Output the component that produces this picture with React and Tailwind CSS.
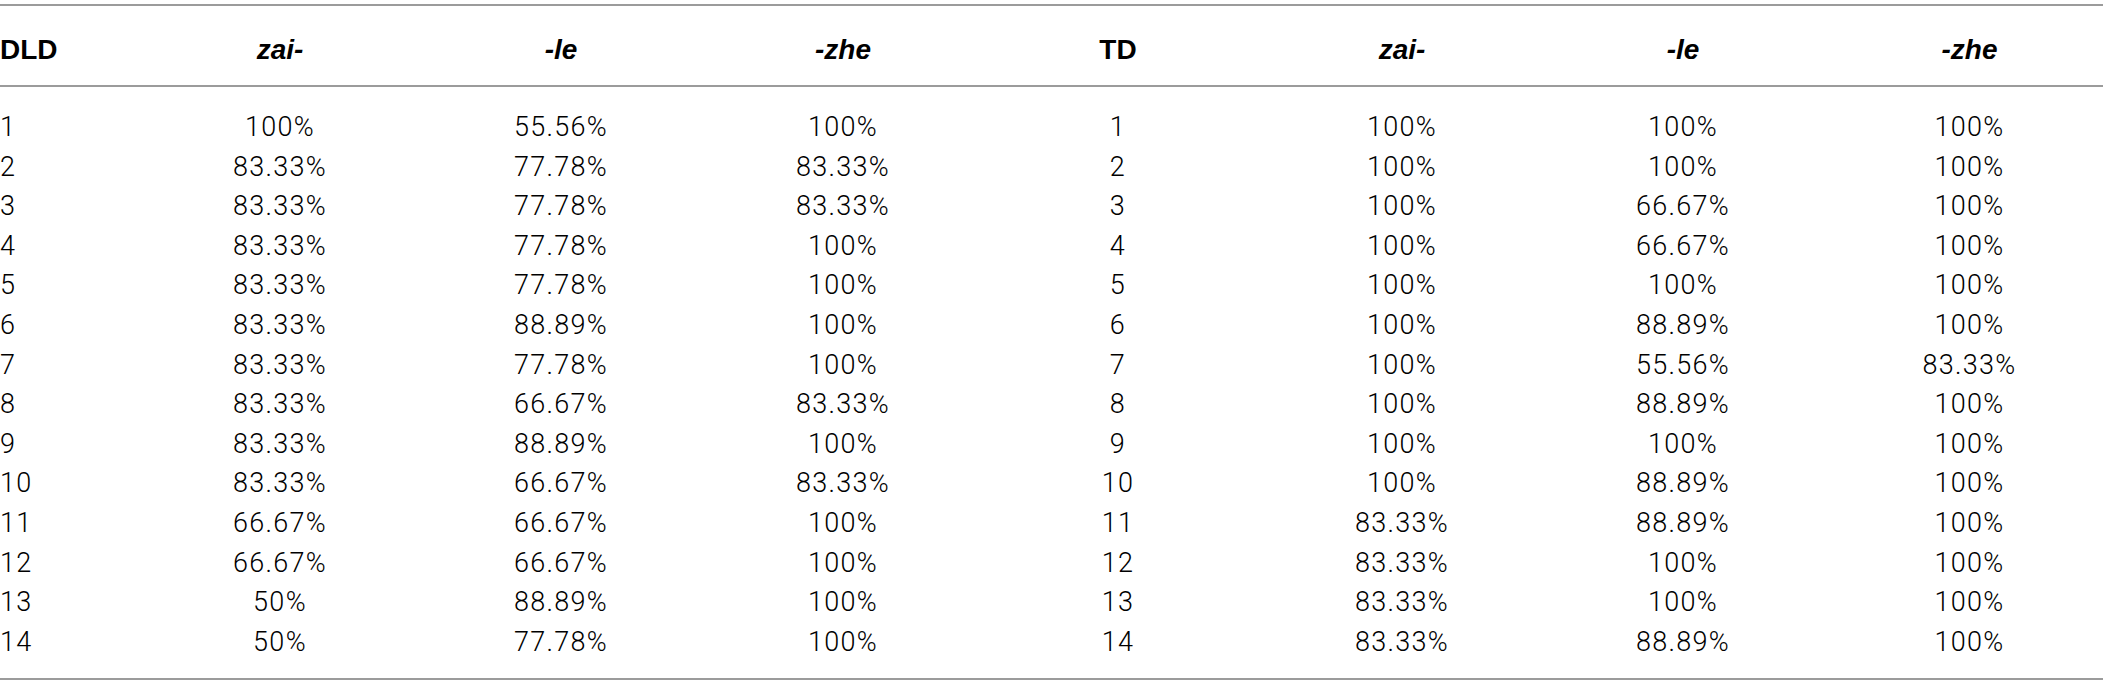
const dld = [
  ['1', '100%', '55.56%', '100%'],
  ['2', '83.33%', '77.78%', '83.33%'],
  ['3', '83.33%', '77.78%', '83.33%'],
  ['4', '83.33%', '77.78%', '100%'],
  ['5', '83.33%', '77.78%', '100%'],
  ['6', '83.33%', '88.89%', '100%'],
  ['7', '83.33%', '77.78%', '100%'],
  ['8', '83.33%', '66.67%', '83.33%'],
  ['9', '83.33%', '88.89%', '100%'],
  ['10', '83.33%', '66.67%', '83.33%'],
  ['11', '66.67%', '66.67%', '100%'],
  ['12', '66.67%', '66.67%', '100%'],
  ['13', '50%', '88.89%', '100%'],
  ['14', '50%', '77.78%', '100%'],
]

const td = [
  ['1', '100%', '100%', '100%'],
  ['2', '100%', '100%', '100%'],
  ['3', '100%', '66.67%', '100%'],
  ['4', '100%', '66.67%', '100%'],
  ['5', '100%', '100%', '100%'],
  ['6', '100%', '88.89%', '100%'],
  ['7', '100%', '55.56%', '83.33%'],
  ['8', '100%', '88.89%', '100%'],
  ['9', '100%', '100%', '100%'],
  ['10', '100%', '88.89%', '100%'],
  ['11', '83.33%', '88.89%', '100%'],
  ['12', '83.33%', '100%', '100%'],
  ['13', '83.33%', '100%', '100%'],
  ['14', '83.33%', '88.89%', '100%'],
]

const cols = 'grid grid-cols-[140px_280px_282px_282px_268px_300px_262px_1fr]'

export default function App(){
  return (
    <div className="w-[2103px] h-[699px] bg-white pt-[4px] text-black">
      <div className="border-t-2 border-b-2 border-[#9b9b9b]">
        <div className={`${cols} h-[81px] pt-[8px] items-center border-b-2 border-[#9b9b9b] font-['Liberation_Sans',sans-serif] font-bold text-[28px]`}>
          <div>DLD</div>
          <div className="text-center italic">zai-</div>
          <div className="text-center italic">-le</div>
          <div className="text-center italic">-zhe</div>
          <div className="text-center">TD</div>
          <div className="text-center italic">zai-</div>
          <div className="text-center italic">-le</div>
          <div className="text-center italic pl-[22px]">-zhe</div>
        </div>
        <div className="pt-[20px] pb-[17px] font-['Roboto',sans-serif] font-light text-[27px] tracking-[1.3px]">
          {dld.map((r, i) => (
            <div key={i} className={`${cols} h-[39.6px] items-center`}>
              <div>{r[0]}</div>
              <div className="text-center">{r[1]}</div>
              <div className="text-center">{r[2]}</div>
              <div className="text-center">{r[3]}</div>
              <div className="text-center">{td[i][0]}</div>
              <div className="text-center">{td[i][1]}</div>
              <div className="text-center">{td[i][2]}</div>
              <div className="text-center pl-[22px]">{td[i][3]}</div>
            </div>
          ))}
        </div>
      </div>
    </div>
  )
}
